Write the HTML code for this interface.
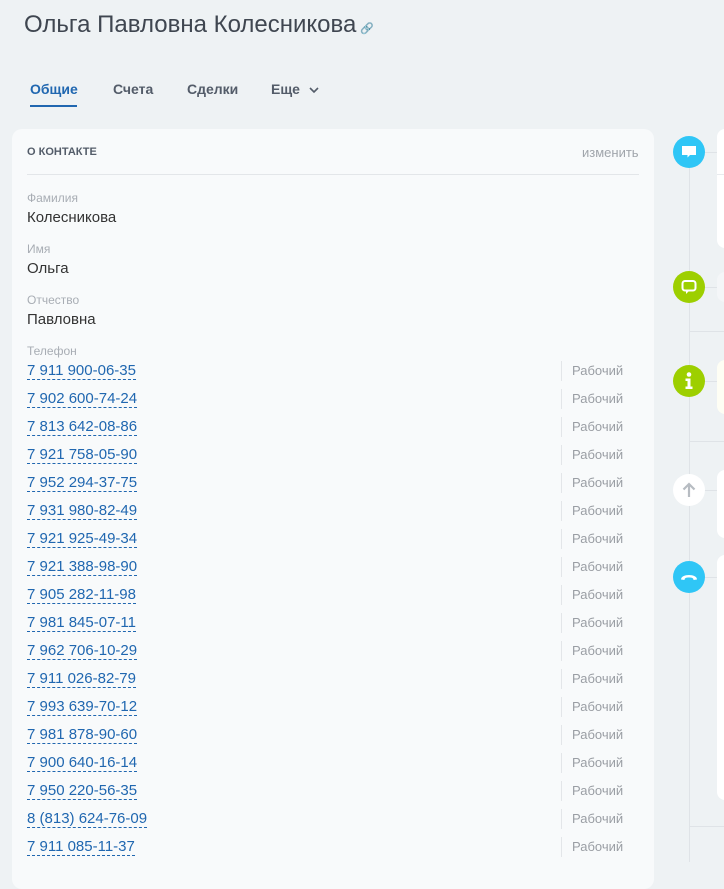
<!DOCTYPE html>
<html><head><meta charset="utf-8"><style>
*{margin:0;padding:0;box-sizing:border-box}
body{width:724px;height:862px;overflow:hidden;background:#eef2f4;font-family:"Liberation Sans","DejaVu Sans",sans-serif;position:relative}
.abs{position:absolute}
h1{position:absolute;left:24px;top:11px;font-weight:normal;font-size:24px;color:#3f4650;letter-spacing:0px}
.tab{position:absolute;top:81px;font-size:14px;font-weight:bold;color:#535c69}
.card{position:absolute;left:12px;top:129px;width:642px;height:760px;background:#f8fafb;border-radius:10px}
.lbl{position:absolute;left:27px;font-size:12px;color:#a8adb4}
.val{position:absolute;left:27px;font-size:15px;color:#333}
.ph{position:absolute;left:27px;font-size:15px;color:#2067b0;border-bottom:1px dashed #2067b0;line-height:16px}
.rb{position:absolute;left:561px;height:20px;border-left:1px solid #e3e6e9;padding-left:10px;font-size:13px;color:#9a9ea4;line-height:20px}
.c{position:absolute;left:673px;width:32px;height:32px;border-radius:50%}
.rc{position:absolute;left:717px;width:20px;background:#fff;border-radius:8px}
.hl{position:absolute;height:1px;background:#dfe3e7}
</style></head><body>
<h1>Ольга Павловна Колесникова<span style="font-size:11px;color:#aaa;margin-left:4px">&#128279;</span></h1>
<div class="tab" style="left:30px;color:#2067b0">Общие</div>
<div class="abs" style="left:30px;top:105px;width:47px;height:2px;background:#2067b0"></div>
<div class="tab" style="left:113px">Счета</div>
<div class="tab" style="left:187px">Сделки</div>
<div class="tab" style="left:271px">Еще <svg width="12" height="8" viewBox="0 0 12 8" style="margin-left:4px"><path d="M2 2l4 4 4-4" stroke="#535c69" stroke-width="1.6" fill="none"/></svg></div>

<div class="card"></div>
<div class="abs" style="left:27px;top:146px;font-size:11px;font-weight:bold;color:#535c69">О КОНТАКТЕ</div>
<div class="abs" style="left:582px;top:145px;font-size:13px;color:#a0a5ab">изменить</div>
<div class="hl" style="left:27px;top:174px;width:612px;background:#e3e6e9"></div>

<div class="lbl" style="top:191px">Фамилия</div>
<div class="val" style="top:209px">Колесникова</div>
<div class="lbl" style="top:242px">Имя</div>
<div class="val" style="top:260px">Ольга</div>
<div class="lbl" style="top:293px">Отчество</div>
<div class="val" style="top:311px">Павловна</div>
<div class="lbl" style="top:344px">Телефон</div>

<div class="ph" style="top:363px">7 911 900-06-35</div><div class="rb" style="top:361px">Рабочий</div>
<div class="ph" style="top:391px">7 902 600-74-24</div><div class="rb" style="top:389px">Рабочий</div>
<div class="ph" style="top:419px">7 813 642-08-86</div><div class="rb" style="top:417px">Рабочий</div>
<div class="ph" style="top:447px">7 921 758-05-90</div><div class="rb" style="top:445px">Рабочий</div>
<div class="ph" style="top:475px">7 952 294-37-75</div><div class="rb" style="top:473px">Рабочий</div>
<div class="ph" style="top:503px">7 931 980-82-49</div><div class="rb" style="top:501px">Рабочий</div>
<div class="ph" style="top:531px">7 921 925-49-34</div><div class="rb" style="top:529px">Рабочий</div>
<div class="ph" style="top:559px">7 921 388-98-90</div><div class="rb" style="top:557px">Рабочий</div>
<div class="ph" style="top:587px">7 905 282-11-98</div><div class="rb" style="top:585px">Рабочий</div>
<div class="ph" style="top:615px">7 981 845-07-11</div><div class="rb" style="top:613px">Рабочий</div>
<div class="ph" style="top:643px">7 962 706-10-29</div><div class="rb" style="top:641px">Рабочий</div>
<div class="ph" style="top:671px">7 911 026-82-79</div><div class="rb" style="top:669px">Рабочий</div>
<div class="ph" style="top:699px">7 993 639-70-12</div><div class="rb" style="top:697px">Рабочий</div>
<div class="ph" style="top:727px">7 981 878-90-60</div><div class="rb" style="top:725px">Рабочий</div>
<div class="ph" style="top:755px">7 900 640-16-14</div><div class="rb" style="top:753px">Рабочий</div>
<div class="ph" style="top:783px">7 950 220-56-35</div><div class="rb" style="top:781px">Рабочий</div>
<div class="ph" style="top:811px">8 (813) 624-76-09</div><div class="rb" style="top:809px">Рабочий</div>
<div class="ph" style="top:839px">7 911 085-11-37</div><div class="rb" style="top:837px">Рабочий</div>

<!-- timeline -->
<div class="abs" style="left:689px;top:152px;width:1px;height:710px;background:#dfe3e7"></div>
<div class="rc" style="top:129px;height:119px"></div>
<div class="hl" style="left:717px;top:174px;width:7px;background:#e8ebee"></div>
<div class="rc" style="top:272px;height:30px;background:#f4f6f8"></div>
<div class="hl" style="left:689px;top:331px;width:35px"></div>
<div class="rc" style="top:360px;height:54px;background:#fefef4"></div>
<div class="hl" style="left:689px;top:441px;width:35px"></div>
<div class="rc" style="top:470px;height:68px"></div>
<div class="rc" style="top:555px;height:245px"></div>
<div class="hl" style="left:689px;top:826px;width:35px"></div>
<div class="hl" style="left:689px;top:152px;width:28px"></div>
<div class="hl" style="left:689px;top:287px;width:28px"></div>
<div class="hl" style="left:689px;top:381px;width:28px"></div>
<div class="hl" style="left:689px;top:490px;width:28px"></div>
<div class="hl" style="left:689px;top:577px;width:28px"></div>

<div class="c" style="top:136px;background:#2fc6f6"><svg width="32" height="32" viewBox="0 0 32 32"><path d="M9 10h14v9h-6l-2.5 2.5v-2.5h-5.5z" fill="#fff"/></svg></div>
<div class="c" style="top:271px;background:#9dcf00"><svg width="32" height="32" viewBox="0 0 32 32"><rect x="9.5" y="10" width="13" height="9.5" rx="2.5" fill="none" stroke="#fff" stroke-width="2"/><path d="M13 19l0 4 4-4" fill="#fff"/></svg></div>
<div class="c" style="top:365px;background:#9dcf00"><svg width="32" height="32" viewBox="0 0 32 32"><circle cx="16" cy="9.5" r="2.3" fill="#fff"/><path d="M12.5 13.5h5v8h2v2.5h-7v-2.5h2v-5.5h-2z" fill="#fff"/></svg></div>
<div class="c" style="top:474px;background:#fff"><svg width="32" height="32" viewBox="0 0 32 32"><path d="M16 23V10M10.5 15.5l5.5-5.5 5.5 5.5" stroke="#b7bcc2" stroke-width="2.2" fill="none"/></svg></div>
<div class="c" style="top:561px;background:#2fc6f6"><svg width="32" height="32" viewBox="0 0 32 32"><path d="M8 18.5c0-6 16-6 16 0l-3.5 0.5c0-2-1.5-2.5-4.5-2.5s-4.5 .5-4.5 2.5z" fill="#fff"/></svg></div>
</body></html>
